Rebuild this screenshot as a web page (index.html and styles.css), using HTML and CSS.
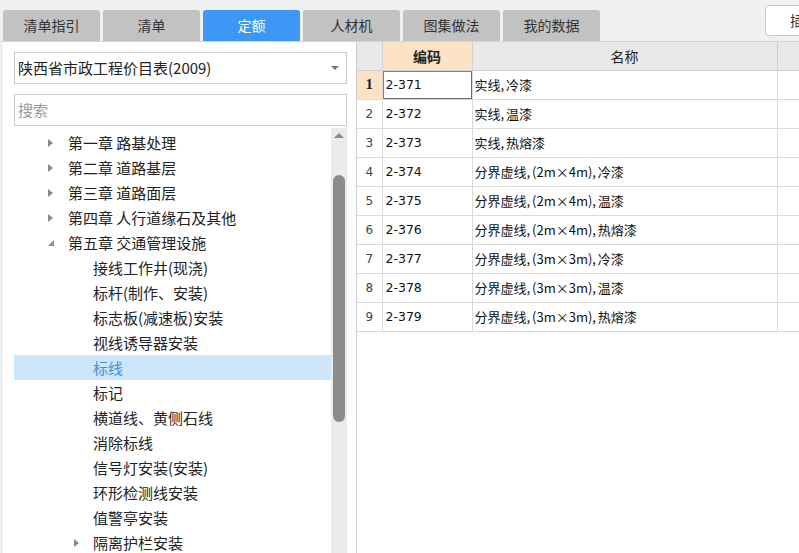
FILE: index.html
```html
<!DOCTYPE html>
<html lang="zh">
<head>
<meta charset="utf-8">
<title>定额</title>
<link rel="stylesheet" href="styles.css">
</head>
<body>
<div class="app">
  <div class="topbar">
    <div class="tabs">
      <div class="tab">清单指引</div>
      <div class="tab">清单</div>
      <div class="tab active">定额</div>
      <div class="tab">人材机</div>
      <div class="tab">图集做法</div>
      <div class="tab">我的数据</div>
    </div>
    <div class="top-btn">插入</div>
  </div>
  <div class="main">
    <div class="left">
      <div class="select">
        <span>陕西省市政工程价目表(2009)</span>
        <span class="caret"></span>
      </div>
      <div class="search">搜索</div>
      <div class="tree-wrap">
        <div class="tree">
          <div class="node ch"><span class="arr r"></span>第一章 路基处理</div>
          <div class="node ch"><span class="arr r"></span>第二章 道路基层</div>
          <div class="node ch"><span class="arr r"></span>第三章 道路面层</div>
          <div class="node ch"><span class="arr r"></span>第四章 人行道缘石及其他</div>
          <div class="node ch"><span class="arr d"></span>第五章 交通管理设施</div>
          <div class="node sub">接线工作井(现浇)</div>
          <div class="node sub">标杆(制作、安装)</div>
          <div class="node sub">标志板(减速板)安装</div>
          <div class="node sub">视线诱导器安装</div>
          <div class="node sub sel">标线</div>
          <div class="node sub">标记</div>
          <div class="node sub">横道线、黄侧石线</div>
          <div class="node sub">消除标线</div>
          <div class="node sub">信号灯安装(安装)</div>
          <div class="node sub">环形检测线安装</div>
          <div class="node sub">值警亭安装</div>
          <div class="node sub"><span class="arr r sm"></span>隔离护栏安装</div>
        </div>
        <div class="scrollbar">
          <span class="up"></span>
          <span class="thumb"></span>
        </div>
      </div>
    </div>
    <div class="grid">
      <table>
        <colgroup>
          <col class="c-no"><col class="c-code"><col class="c-name"><col>
        </colgroup>
        <thead>
          <tr><th class="no"></th><th class="code-h">编码</th><th>名称</th><th></th></tr>
        </thead>
        <tbody>
          <tr><td class="no cur">1</td><td class="code focus">2-371</td><td>实线, 冷漆</td><td></td></tr>
          <tr><td class="no">2</td><td class="code">2-372</td><td>实线, 温漆</td><td></td></tr>
          <tr><td class="no">3</td><td class="code">2-373</td><td>实线, 热熔漆</td><td></td></tr>
          <tr><td class="no">4</td><td class="code">2-374</td><td>分界虚线, (2m×4m), 冷漆</td><td></td></tr>
          <tr><td class="no">5</td><td class="code">2-375</td><td>分界虚线, (2m×4m), 温漆</td><td></td></tr>
          <tr><td class="no">6</td><td class="code">2-376</td><td>分界虚线, (2m×4m), 热熔漆</td><td></td></tr>
          <tr><td class="no">7</td><td class="code">2-377</td><td>分界虚线, (3m×3m), 冷漆</td><td></td></tr>
          <tr><td class="no">8</td><td class="code">2-378</td><td>分界虚线, (3m×3m), 温漆</td><td></td></tr>
          <tr><td class="no">9</td><td class="code">2-379</td><td>分界虚线, (3m×3m), 热熔漆</td><td></td></tr>
        </tbody>
      </table>
    </div>
  </div>
</div>
</body>
</html>
```
FILE: styles.css
```css
* { box-sizing: border-box; }
html, body { margin: 0; padding: 0; }
body {
  width: 799px;
  height: 553px;
  overflow: hidden;
  background: #f0f0f0;
  font-family: "Noto Sans CJK SC", "Noto Sans", sans-serif;
  color: #222;
}
.app { display: flex; flex-direction: column; height: 553px; }

.topbar {
  height: 42px;
  display: flex;
  align-items: flex-start;
  border-bottom: 1px solid #d4d4d4;
  flex: none;
}
.tabs {
  display: flex;
  gap: 3px;
  padding-left: 3px;
  margin-top: 10px;
}
.tab {
  width: 97px;
  height: 31px;
  background: #c2c2c2;
  border-radius: 3px 3px 0 0;
  font-size: 14px;
  line-height: 31px;
  text-align: center;
  color: #333;
}
.tab.active { background: #3d98f5; color: #fff; }
.top-btn {
  margin-left: auto;
  margin-top: 5px;
  margin-right: -50px;
  width: 84px;
  height: 31px;
  background: #fff;
  border: 1px solid #c8c8c8;
  border-radius: 4px;
  font-size: 14px;
  line-height: 29px;
  padding-left: 24px;
  color: #333;
}

.main { flex: 1; display: flex; min-height: 0; }

.left {
  width: 354px;
  margin-left: 3px;
  background: #fff;
  border-right: 1px solid #cfcfcf;
  padding: 10px 8px 0 11px;
  display: flex;
  flex-direction: column;
  flex: none;
}
.select, .search {
  height: 32px;
  border: 1px solid #c9c9c9;
  font-size: 15px;
  line-height: 30px;
  padding-left: 3px;
  width: 333px;
}
.select { display: flex; justify-content: space-between; align-items: center; color: #222; }
.caret {
  width: 0; height: 0;
  border-left: 4px solid transparent;
  border-right: 4px solid transparent;
  border-top: 4px solid #777;
  margin-right: 7px;
}
.search { margin-top: 10px; color: #9a9a9a; }

.tree-wrap { display: flex; margin-top: 2px; flex: 1; min-height: 0; }
.tree { width: 317px; padding-top: 2px; }
.node {
  height: 25px;
  line-height: 25px;
  font-size: 15px;
  color: #222;
  position: relative;
  white-space: nowrap;
}
.node.ch { padding-left: 54px; }
.node.sub { padding-left: 79px; }
.node.sel { background: #cce6fb; color: #4a8fd6; }
.arr {
  position: absolute;
  top: 9px;
  width: 0; height: 0;
}
.ch .arr { left: 34px; }
.sub .arr { left: 60px; }
.arr.r {
  border-top: 4px solid transparent;
  border-bottom: 4px solid transparent;
  border-left: 5px solid #8a8a8a;
}
.arr.d {
  top: 10px;
  border-left: 6px solid transparent;
  border-bottom: 6px solid #8a8a8a;
}

.scrollbar {
  width: 16px;
  background: #ebebeb;
  position: relative;
}
.scrollbar .up {
  position: absolute;
  left: 3px; top: 5px;
  width: 0; height: 0;
  border-left: 5px solid transparent;
  border-right: 5px solid transparent;
  border-bottom: 5px solid #8a8a8a;
}
.scrollbar .thumb {
  position: absolute;
  left: 2px; top: 47px;
  width: 12px; height: 247px;
  background: #8c8c8c;
  border-radius: 6px;
}

.grid { flex: 1; background: #fff; overflow: hidden; }
table {
  border-collapse: collapse;
  table-layout: fixed;
  width: 460px;
  font-size: 13px;
}
col.c-no { width: 25px; }
col.c-code { width: 90px; }
col.c-name { width: 305px; }
th, td {
  border: 1px solid #dadada;
  padding: 0;
  white-space: nowrap;
  overflow: hidden;
}
thead tr { height: 28px; }
th {
  background: #e8e8e8;
  font-weight: normal;
  font-size: 14px;
  color: #222;
  border-top: none;
  border-color: #d0d0d0;
}
th.code-h { background: #fde3c5; font-weight: bold; }
tbody tr { height: 29px; }
td { padding-left: 2px; color: #111; word-spacing: -1px; }
td.no {
  text-align: center;
  padding-left: 0;
  font-family: "DejaVu Sans", sans-serif;
  font-size: 12px;
  color: #444;
  background: #fff;
}
td.no.cur {
  background: #fde3c5;
  font-family: "Liberation Serif", serif;
  font-weight: bold;
  font-size: 15px;
  color: #222;
}
td.code { font-family: "DejaVu Sans", sans-serif; font-size: 12.5px; padding-left: 3px; }
td.focus { box-shadow: inset 1px 1px 0 #3d8ff0, inset -1px -1px 0 #666; }
td:first-child, th:first-child { border-left: none; }
```
